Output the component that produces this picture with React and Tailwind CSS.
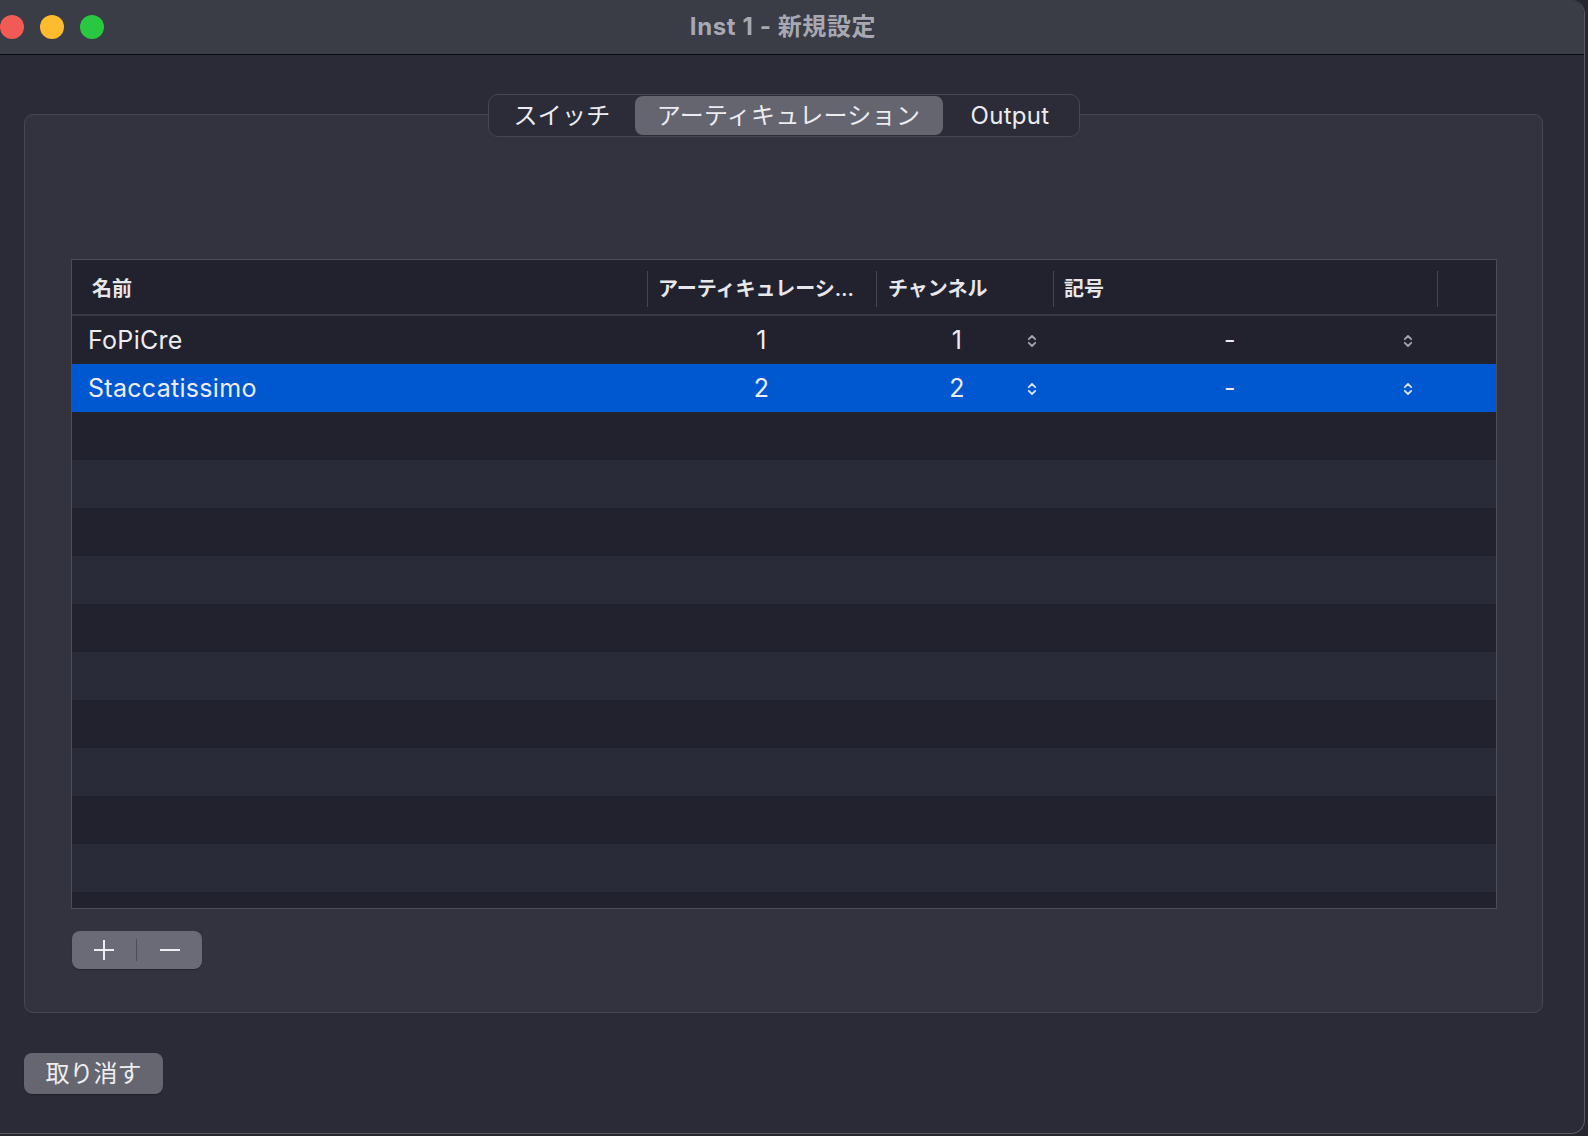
import React, { useState } from "react";

const rows = [
  { name: "FoPiCre", art: "1", ch: "1", sym: "-" },
  { name: "Staccatissimo", art: "2", ch: "2", sym: "-" },
];

function UpDown({ light }) {
  return (
    <svg width="10" height="16" viewBox="0 0 10 16" fill="none" className="shrink-0">
      <path
        d="M1.8 6.2 L5 3 L8.2 6.2 M1.8 9.8 L5 13 L8.2 9.8"
        stroke={light ? "#d7e2f5" : "#a3a4ad"}
        strokeWidth="1.8"
        strokeLinecap="round"
        strokeLinejoin="round"
      />
    </svg>
  );
}

function Tabs() {
  const [tab, setTab] = useState(1);
  const tabs = [
    { label: "スイッチ", w: "w-[145px]" },
    { label: "アーティキュレーション", w: "w-[308px]" },
    { label: "Output", w: "w-[135px]" },
  ];
  return (
    <div className="relative z-10 flex h-[43px] items-center rounded-[10px] border border-[#464752] bg-[#2b2c38] px-[1px]">
      {tabs.map((t, i) => (
        <button
          key={t.label}
          onClick={() => setTab(i)}
          className={`${t.w} h-[39px] rounded-[8px] text-[24px] leading-none tracking-[0.3px] text-[#ececf0] ${
            tab === i ? "bg-[#64656f]" : ""
          }`}
        >
          {t.label}
        </button>
      ))}
    </div>
  );
}

export default function App() {
  const [selected, setSelected] = useState(1);
  const lines = Array.from({ length: 13 }, (_, i) => rows[i] || null);

  return (
    <div className="h-[1136px] w-[1588px] overflow-hidden bg-[#25262e] font-['Inter','Noto_Sans_CJK_JP',sans-serif]">
      <div className="flex h-[1134px] w-[1585px] flex-col overflow-hidden rounded-r-[14px] border-r border-b border-[#595a64] bg-[#2a2b37]">
        {/* title bar */}
        <div className="grid h-[55px] shrink-0 grid-cols-[1fr_auto_1fr] items-center border-b border-[#0c0c10] bg-[#3a3c46] pr-[18px]">
          <div className="flex items-center gap-[16px]">
            <span className="h-[24px] w-[24px] rounded-full bg-[#f25a55]" />
            <span className="h-[24px] w-[24px] rounded-full bg-[#fdbb2e]" />
            <span className="h-[24px] w-[24px] rounded-full bg-[#2ac840]" />
          </div>
          <div className="text-[24px] font-bold leading-none tracking-[0.6px] text-[#a7a8b2]">Inst 1 - 新規設定</div>
          <div />
        </div>

        {/* content */}
        <div className="flex flex-1 flex-col pl-[24px] pt-[39px]">
          <div className="flex w-[1519px] flex-col items-center">
            <Tabs />
            <div className="-mt-[23px] flex h-[899px] w-full flex-col rounded-[9px] border border-[#46474f] bg-[#32333f] pl-[46px] pt-[144px]">
              <div className="h-[650px] w-[1426px] overflow-hidden border border-[#4b4c58] bg-[#21222e]">
                {/* header */}
                <div className="grid h-[56px] grid-cols-[575px_229px_177px_384px_1fr] items-center border-b-2 border-[#393a45] pt-[3px] text-[20px] font-semibold text-[#e7e7eb]">
                  <div className="pl-[20px]">名前</div>
                  <div className="flex items-center">
                    <span className="h-[36px] w-px bg-[#454652]" />
                    <span className="pl-[10px]">アーティキュレーシ…</span>
                  </div>
                  <div className="flex items-center">
                    <span className="h-[36px] w-px bg-[#454652]" />
                    <span className="pl-[11px]">チャンネル</span>
                  </div>
                  <div className="flex items-center">
                    <span className="h-[36px] w-px bg-[#454652]" />
                    <span className="pl-[10px]">記号</span>
                  </div>
                  <div className="flex items-center">
                    <span className="h-[36px] w-px bg-[#454652]" />
                  </div>
                </div>

                {/* rows */}
                {lines.map((r, i) => {
                  const sel = r && selected === i;
                  const bg = sel ? "bg-[#0058d0]" : i % 2 === 0 ? "bg-[#21222e]" : "bg-[#2a2b38]";
                  return (
                    <div
                      key={i}
                      onClick={() => r && setSelected(i)}
                      className={`grid h-[48px] grid-cols-[575px_229px_177px_384px_1fr] items-center pt-[1px] text-[25px] leading-none tracking-[0.3px] text-[#ededf1] ${bg}`}
                    >
                      {r && (
                        <>
                          <div className="pl-[16px]">{r.name}</div>
                          <div className="text-center">{r.art}</div>
                          <div className="flex items-center">
                            <span className="ml-[16px] w-[130px] text-center">{r.ch}</span>
                            <span className="ml-[5px]">
                              <UpDown light={sel} />
                            </span>
                          </div>
                          <div className="flex items-center">
                            <span className="ml-[27px] w-[300px] text-center">{r.sym}</span>
                            <span className="ml-[23px]">
                              <UpDown light={sel} />
                            </span>
                          </div>
                          <div />
                        </>
                      )}
                    </div>
                  );
                })}
              </div>

              {/* add / remove */}
              <div className="ml-[1px] mt-[22px] flex h-[38px] w-[130px] items-center rounded-[8px] bg-[#6a6b76] shadow-[0_1px_1px_rgba(0,0,0,0.3)]">
                <button className="flex h-full w-[64px] items-center justify-center">
                  <svg width="22" height="22" viewBox="0 0 22 22">
                    <path d="M11 1 V21 M1 11 H21" stroke="#eeeef2" strokeWidth="2" />
                  </svg>
                </button>
                <span className="h-[22px] w-px bg-[#4d4e58]" />
                <button className="flex h-full w-[65px] items-center justify-center">
                  <svg width="22" height="22" viewBox="0 0 22 22">
                    <path d="M1 11 H21" stroke="#eeeef2" strokeWidth="2" />
                  </svg>
                </button>
              </div>
            </div>
          </div>

          <button className="mt-[40px] flex h-[41px] w-[139px] items-center justify-center rounded-[8px] bg-[#65666f] text-[24px] leading-none text-[#eeeef2] shadow-[0_1px_1px_rgba(0,0,0,0.3)]">
            取り消す
          </button>
        </div>
      </div>
    </div>
  );
}
